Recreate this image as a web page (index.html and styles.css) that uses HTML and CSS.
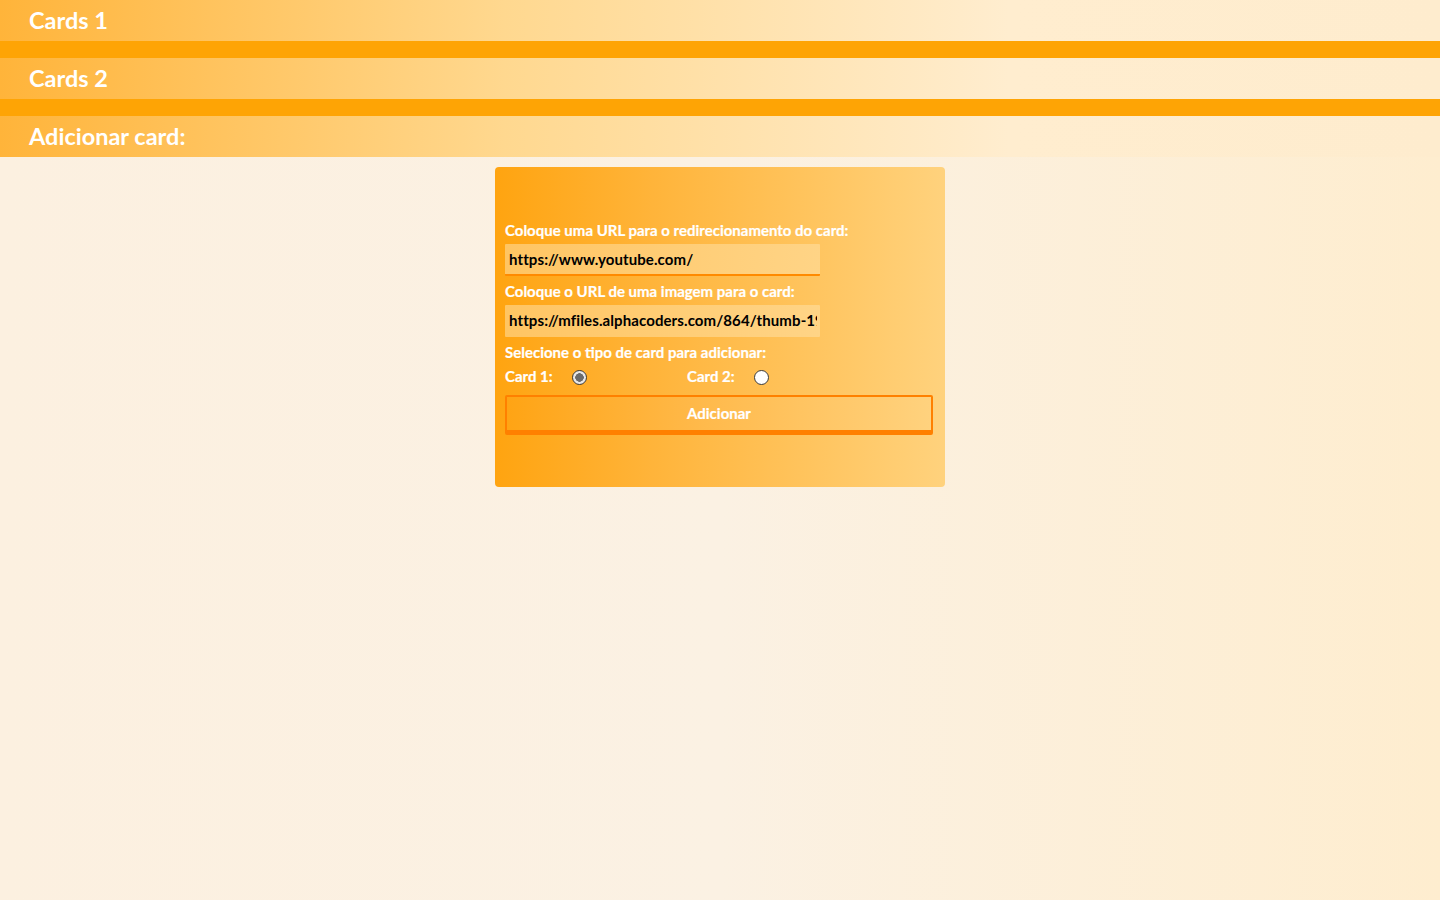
FILE: index.html
```html
<!DOCTYPE html>
<html lang="pt">
<head>
<meta charset="utf-8">
<title>Cards</title>
<link rel="stylesheet" href="styles.css">
</head>
<body>
<section class="section">
  <h2 class="section-title">Cards 1</h2>
</section>
<section class="section">
  <h2 class="section-title">Cards 2</h2>
</section>
<section class="section last">
  <h2 class="section-title">Adicionar card:</h2>
</section>
<main class="main">
  <form class="card-form">
    <label class="field-label" for="url">Coloque uma URL para o redirecionamento do card:</label>
    <input class="field-input focused" id="url" type="text" value="https://www.youtube.com/">
    <label class="field-label" for="img">Coloque o URL de uma imagem para o card:</label>
    <input class="field-input" id="img" type="text" value="https://mfiles.alphacoders.com/864/thumb-1920-864321.jpg">
    <span class="field-label">Selecione o tipo de card para adicionar:</span>
    <div class="radio-row">
      <label class="radio-item">Card 1: <input class="radio" type="radio" name="tipo" checked></label>
      <label class="radio-item">Card 2: <input class="radio" type="radio" name="tipo"></label>
    </div>
    <button class="submit" type="button">Adicionar</button>
  </form>
</main>
</body>
</html>
```
FILE: styles.css
```css
html, body {
  margin: 0;
  padding: 0;
}
body {
  min-height: 900px;
  background: linear-gradient(to right, #fcf0e0 0%, #fbf1e3 50%, #feedcf 100%);
  font-family: Lato, "Open Sans", sans-serif;
  font-weight: 700;
  color: #fff;
}
.section {
  background: #fea405;
  padding-bottom: 17px;
}
.section.last {
  padding-bottom: 0;
}
.section-title {
  margin: 0;
  height: 41px;
  box-sizing: border-box;
  padding-left: 29px;
  line-height: 41px;
  font-size: 23.5px;
  font-weight: 700;
  color: #fff;
  background: linear-gradient(to right, #ffb43a 0%, #ffd88f 35%, #ffedcf 70%, #feecce 100%);
}
.main {
  display: flex;
  justify-content: center;
  padding-top: 10px;
}
.card-form {
  width: 450px;
  height: 320px;
  box-sizing: border-box;
  padding: 54px 12px 0 10px;
  border-radius: 4px;
  background: linear-gradient(to right, #ffa410 0%, #ffb43a 35%, #ffd27d 100%);
  display: flex;
  flex-direction: column;
  align-items: flex-start;
}
.field-label {
  font-size: 15px;
  line-height: 18px;
  color: #fff;
  margin-bottom: 5px;
  -webkit-text-stroke: 0.2px #fff;
}
.field-input {
  width: 315px;
  height: 32px;
  box-sizing: border-box;
  border: none;
  border-bottom: 2px solid transparent;
  border-radius: 1px;
  padding: 0 3px 0 4px;
  margin-bottom: 6px;
  background: linear-gradient(to right, #ffc563, #ffd486);
  font-family: Lato, "Open Sans", sans-serif;
  font-weight: 700;
  font-size: 15px;
  letter-spacing: 0.1px;
  color: #000;
  outline: none;
}
.field-input.focused {
  border-bottom-color: #ff8a00;
}
.radio-row {
  display: grid;
  grid-template-columns: 182px 182px;
  margin-top: 1px;
}
.radio-item {
  display: flex;
  align-items: center;
  font-size: 15px;
  line-height: 18px;
  -webkit-text-stroke: 0.2px #fff;
}
.radio {
  appearance: none;
  -webkit-appearance: none;
  width: 15px;
  height: 15px;
  margin: 3px 0 0 19px;
  border-radius: 50%;
  border: 1px solid #3a3a3a;
  background: #fff;
  box-sizing: border-box;
}
.radio:checked {
  background: radial-gradient(circle, #6b6b6b 0 4px, #e8e8e8 4.5px);
}
.submit {
  margin-top: 10px;
  width: 428px;
  height: 40px;
  box-sizing: border-box;
  border: 2px solid #ff8000;
  border-bottom-width: 5px;
  border-radius: 2px;
  background: linear-gradient(to right, #ffa414 0%, #ffb94a 45%, #ffd27e 100%);
  color: #fff;
  font-family: Lato, "Open Sans", sans-serif;
  font-weight: 700;
  font-size: 15px;
  -webkit-text-stroke: 0.2px #fff;
  padding: 0 0 2px;
}
```
